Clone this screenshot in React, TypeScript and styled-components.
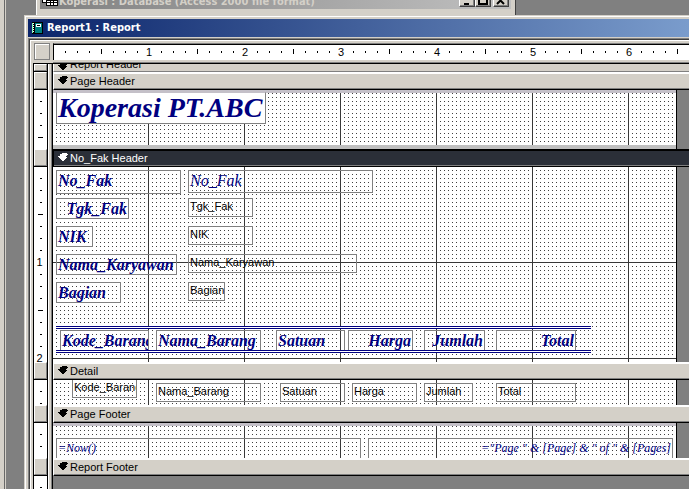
import React from 'react';
import styled, { createGlobalStyle, css } from 'styled-components';

const FACE = '#d4d0c8';
const SHADOW = '#808080';
const INK = '#000080';
const UI = "'Liberation Sans', Arial, sans-serif";
const SERIF = "'Liberation Serif', 'Times New Roman', serif";

const GlobalStyle = createGlobalStyle`
  * { box-sizing: border-box; }
  html, body { margin: 0; height: 100%; }
  body { background: ${SHADOW}; overflow: hidden; font: 11px/14px ${UI}; color: #000; }
  #root { height: 100%; }
`;

const Desktop = styled.div`
  display: flex;
  height: 100%;
  min-height: 100vh;
`;

const AppEdge = styled.div`
  flex: 0 0 6px;
  background: ${FACE};
  border-right: 1px solid ${FACE};
  box-shadow: inset -1px 0 #686868;
`;

const Workspace = styled.main`
  flex: 1;
  min-width: 0;
  display: flex;
  flex-direction: column;
  padding-left: 18px;
  overflow: hidden;
`;

const DatabaseWindow = styled.section`
  flex: 0 0 15px;
  width: 480px;
  margin-left: 12px;
  padding-left: 3px;
  padding-right: 4px;
  background: ${FACE};
  border-left: 1px solid #fff;
  border-right: 1px solid #404040;
`;

const DatabaseTitle = styled.header`
  height: 9px;
  display: flex;
  align-items: flex-end;
  gap: 1px;
  padding: 0 2px;
  overflow: hidden;
  background: linear-gradient(to right, #808080, #c0c0c0);
  color: ${FACE};
  font: bold 11px/14px 'DejaVu Sans Condensed', 'DejaVu Sans', sans-serif;

  h2 { flex: 1; margin: 0; font: inherit; height: 14px; }
`;

const TableSlot = styled.span`
  display: flex;
  padding-bottom: 3px;
`;

const CaptionButtons = styled.div`
  display: flex;
  height: 16px;
  margin-bottom: 2px;
`;

const CaptionButton = styled.button<{ $apart?: boolean }>`
  width: 16px;
  height: 14px;
  padding: 0;
  margin-left: ${p => (p.$apart ? 2 : 0)}px;
  display: grid;
  place-items: center;
  align-self: flex-end;
  background: ${FACE};
  border: 1px solid #fff;
  border-right-color: #404040;
  border-bottom-color: #404040;
  box-shadow: inset -1px -1px ${SHADOW};
`;

const ReportWindow = styled.section`
  flex: 1;
  min-height: 0;
  display: flex;
  flex-direction: column;
  padding: 2px 0 0 2px;
  background: ${FACE};
  border-top: 1px solid ${FACE};
  border-left: 1px solid ${FACE};
  box-shadow: inset 1px 1px #fff;
`;

const TitleBar = styled.header`
  flex: 0 0 19px;
  display: flex;
  align-items: center;
  gap: 4px;
  margin: 1px 0 0 1px;
  padding: 0 0 0 4px;
  background: linear-gradient(to right, #0a246a, #7a9ccc);
  border-bottom: 1px solid ${FACE};
  color: #fff;

  h1 { margin: 0; font: bold 11px/14px 'DejaVu Sans Condensed', 'DejaVu Sans', sans-serif; }
`;

const Client = styled.div`
  flex: 1;
  min-height: 0;
  display: flex;
  flex-direction: column;
  margin-left: 1px;
  padding: 4px 0 0 4px;
  border-top: 1px solid ${SHADOW};
  border-left: 1px solid ${SHADOW};
  box-shadow: inset 1px 1px #404040, inset 2px 2px #fff;
`;

const RulerRow = styled.div`
  flex: 0 0 20px;
  display: flex;
  gap: 3px;
  padding-left: 1px;
`;

const Corner = styled.button`
  flex: 0 0 16px;
  height: 17px;
  padding: 0;
  background: ${FACE};
  border: 1px solid ${SHADOW};
  box-shadow: inset 1px 1px #fff;
`;

const HorizontalRuler = styled.div`
  flex: 1;
  min-width: 0;
  display: flex;
  height: 17px;
  padding: 0 0 2px 5px;
  overflow: hidden;
  background: #fff;
  border-top: 1px solid ${SHADOW};
  border-left: 1px solid #000;
  box-shadow: inset 0 1px #000, 0 2px ${FACE}, 0 3px ${SHADOW};
`;

const HTick = styled.div<{ $half?: boolean }>`
  flex: 0 0 12px;
  display: flex;
  align-items: center;
  justify-content: center;
  padding-top: 1px;
  font-size: 11px;
  line-height: 12px;

  &::before {
    content: '';
    width: 1px;
    height: ${p => (p.$half ? 5 : 2)}px;
    background: #000;
  }
`;

const HNumber = styled(HTick)`
  &::before { display: none; }
`;

const Bands = styled.div`
  flex: 1;
  min-height: 0;
  border-top: 1px solid #000;
  overflow: hidden;
  display: flex;
  flex-direction: column;
`;

const Row = styled.div<{ $height?: number }>`
  display: flex;
  flex: ${p => (p.$height ? `0 0 ${p.$height}px` : '1 0 0')};
  min-height: 0;
`;

const Gutter = styled.div`
  flex: 0 0 15px;
  overflow: hidden;
  padding-top: 5px;
  background: #fff;
  border: solid #000;
  border-width: 0 1px;
`;

const Divider = styled.div`
  flex: 0 0 5px;
  background: ${FACE};
  border-right: 1px solid #000;
  box-shadow: inset -1px 0 ${SHADOW}, inset 1px 0 #fff;
`;

const VTick = styled.div<{ $half?: boolean }>`
  height: 12px;
  display: flex;
  align-items: center;
  justify-content: center;
  font-size: 11px;
  line-height: 12px;

  &::before {
    content: '';
    width: ${p => (p.$half ? 5 : 2)}px;
    height: 1px;
    background: #000;
  }
`;

const VNumber = styled(VTick)`
  padding-right: 2px;
  &::before { display: none; }
`;

const SelectorCell = styled(Gutter)`
  padding: 0;
  background: ${FACE};
  display: flex;
  border-bottom-width: 1px;
`;

const Selector = styled.button`
  flex: 1;
  padding: 0;
  background: ${FACE};
  border: 1px solid #fff;
  border-right-color: ${SHADOW};
  border-bottom-color: ${SHADOW};
`;

const BandBar = styled.div<{ $selected?: boolean; $clipped?: boolean }>`
  flex: 1;
  min-width: 0;
  display: flex;
  align-items: ${p => (p.$clipped ? 'flex-end' : 'center')};
  gap: 2px;
  padding: 0 0 2px 4px;
  overflow: hidden;
  white-space: nowrap;
  font-size: 11px;
  line-height: 14px;
  background: ${FACE};
  border-top: 2px solid #fff;
  border-left: 1px solid #fff;
  border-bottom: 1px solid #000;
  box-shadow: inset 0 -1px ${SHADOW};
  ${p => p.$clipped && css`
    padding-bottom: 0;
    border-top: 0;
    border-bottom-color: ${SHADOW};
    box-shadow: none;
  `}
  ${p => p.$selected && css`
    background: #2b2f38;
    color: #fff;
    border-color: #000;
  `}
`;

const Canvas = styled.div`
  flex: 1;
  min-width: 0;
  display: flex;
  background: ${SHADOW};
  overflow: hidden;
`;

/* Six and a half inches of printable width at 96 pixels to the inch. */
const Sheet = styled.div<{ $topEdge?: boolean; $bottomEdge?: boolean }>`
  position: relative;
  flex: 0 0 624px;
  overflow: hidden;
  border-right: 1px solid #000;
  background-image:
    ${p => (p.$topEdge ? 'linear-gradient(#c4c0c8, #c4c0c8),' : '')}
    ${p => (p.$bottomEdge ? 'linear-gradient(#c0c0c0, #c0c0c0),' : '')}
    linear-gradient(to right, transparent 95px, #383838 95px),
    linear-gradient(to bottom, transparent 95px, #383838 95px),
    linear-gradient(to right, #fff 3px, transparent 3px),
    linear-gradient(to bottom, #fff 3px, #404040 3px);
  background-size:
    ${p => (p.$topEdge ? '100% 3px,' : '')}
    ${p => (p.$bottomEdge ? '100% 4px,' : '')}
    96px 96px, 96px 96px, 4px 4px, 4px 4px;
  background-position:
    ${p => (p.$topEdge ? '0 0,' : '')}
    ${p => (p.$bottomEdge ? '0 100%,' : '')}
    0 0, 0 0, 0 0, 0 0;
  background-repeat:
    ${p => (p.$topEdge ? 'no-repeat,' : '')}
    ${p => (p.$bottomEdge ? 'no-repeat,' : '')}
    repeat, repeat, repeat, repeat;
`;

type Kind = 'title' | 'label' | 'script' | 'expr' | 'field';

const kinds = {
  title: css`font: italic bold 28px/29px ${SERIF}; color: ${INK}; background: #fff; border-top-color: #c4c0c8;`,
  label: css`font: italic bold 16px/20px ${SERIF}; color: ${INK};`,
  script: css`font: italic 16px/19px ${SERIF}; color: ${INK};`,
  expr: css`font: italic 12px/18px ${SERIF}; color: ${INK};`,
  field: css`font: 11px/14px ${UI}; color: #000;`,
};

/* A report control, placed where the designer dropped it on the sheet. */
const Control = styled.div<{ $x: number; $y: number; $w: number; $h: number; $kind: Kind; $right?: boolean }>`
  position: absolute;
  left: ${p => p.$x}px;
  top: ${p => p.$y}px;
  width: ${p => p.$w}px;
  height: ${p => p.$h}px;
  padding: 0 1px;
  border: 1px solid ${SHADOW};
  overflow: hidden;
  white-space: pre;
  text-align: ${p => (p.$right ? 'right' : 'left')};
  ${p => kinds[p.$kind]}
`;

const DoubleRule = styled.div<{ $y: number }>`
  position: absolute;
  left: 3px;
  top: ${p => p.$y}px;
  width: 535px;
  height: 3px;
  background: #fff;
  border: solid ${INK};
  border-width: 1px 0;
`;

type Item = { x: number; y: number; w: number; h: number; kind: Kind; text: string; right?: boolean };

const c = (kind: Kind, text: string, x: number, y: number, w: number, h: number, right = false): Item =>
  ({ kind, text, x, y, w, h, right });

type Band = {
  name: string;
  bar: number;
  body: number;
  selected?: boolean;
  clipped?: boolean;
  topEdge?: boolean;
  bottomEdge?: boolean;
  rules?: number[];
  items: Item[];
};

const bands: Band[] = [
  { name: 'Report Header', bar: 8, body: 0, clipped: true, items: [] },
  {
    name: 'Page Header', bar: 18, body: 59, topEdge: true, bottomEdge: true,
    items: [c('title', 'Koperasi PT.ABC', 3, 2, 210, 32)],
  },
  {
    name: 'No_Fak Header', bar: 18, body: 195, selected: true, rules: [159, 183],
    items: [
      c('label', 'No_Fak', 3, 3, 125, 24),
      c('label', 'Tgk_Fak', 3, 31, 73, 21, true),
      c('label', 'NIK', 3, 59, 37, 21),
      c('label', 'Nama_Karyawan', 3, 87, 121, 21),
      c('label', 'Bagian', 3, 115, 65, 21),
      c('script', 'No_Fak', 135, 3, 185, 23),
      c('field', 'Tgk_Fak', 135, 31, 65, 19),
      c('field', 'NIK', 135, 59, 65, 19),
      c('field', 'Nama_Karyawan', 135, 87, 169, 19),
      c('field', 'Bagian', 135, 115, 37, 19),
      c('label', 'Kode_Barang', 7, 163, 89, 21, true),
      c('label', 'Nama_Barang', 103, 163, 105, 21),
      c('label', 'Satuan', 223, 163, 69, 21),
      c('label', 'Harga', 295, 163, 65, 21, true),
      c('label', 'Jumlah', 371, 163, 61, 21, true),
      c('label', 'Total', 443, 163, 80, 21, true),
    ],
  },
  {
    name: 'Detail', bar: 18, body: 25,
    items: [
      c('field', 'Kode_Barang', 19, -1, 65, 19),
      c('field', 'Nama_Barang', 103, 3, 105, 19),
      c('field', 'Satuan', 227, 3, 65, 19),
      c('field', 'Harga', 299, 3, 65, 19),
      c('field', 'Jumlah', 371, 3, 49, 19),
      c('field', 'Total', 443, 3, 80, 19),
    ],
  },
  {
    name: 'Page Footer', bar: 18, body: 35, topEdge: true,
    items: [
      c('expr', '=Now()', 3, 15, 305, 24),
      c('expr', '="Page " & [Page] & " of " & [Pages]', 315, 15, 305, 24, true),
    ],
  },
  { name: 'Report Footer', bar: 18, body: 0, items: [] },
];

const Arrow = () => (
  <svg width="10" height="9" viewBox="0 0 10 9" fill="currentColor" shapeRendering="crispEdges" aria-hidden="true">
    <path d="M4 0H9V1H10V2H9V3H8V4H9V5H8V6H7V7H6V8H4V7H3V6H2V5H1V4H0V3H2V1H4Z" />
  </svg>
);

const BookIcon = () => (
  <svg width="11" height="12" viewBox="0 0 11 12" shapeRendering="crispEdges" aria-hidden="true">
    <path d="M0 0H11V12H0Z" fill="#000" />
    <path d="M0 1H1V11H0Z" fill="#8fb" />
    <path d="M1 1H2V2H1ZM1 3H2V4H1ZM1 5H2V6H1ZM1 7H2V8H1ZM1 9H2V10H1Z" fill="#fff" />
    <path d="M3 1H10V11H3Z" fill="#008080" />
    <path d="M4 2H9V5H4Z" fill="#fff" />
    <path d="M5 3H8V4H5Z" fill="#000" />
  </svg>
);

const TableIcon = () => (
  <svg width="16" height="16" viewBox="0 0 16 16" shapeRendering="crispEdges" aria-hidden="true">
    <path d="M0 0H12V13H0Z" fill="#000" />
    <path d="M1 1H4V12H1ZM5 1H11V12H5Z" fill="#fff" />
    <path d="M4 5H16V16H4Z" fill="#000" />
    <path d="M5 8H8V10H5ZM9 8H11V10H9ZM12 8H15V10H12ZM5 11H8V12H5ZM9 11H11V12H9ZM12 11H15V12H12ZM5 13H8V15H5ZM9 13H11V15H9ZM12 13H15V15H12Z" fill="#fff" />
  </svg>
);

const Glyph = ({ d }: { d: string }) => (
  <svg width="10" height="9" viewBox="0 0 10 9" fill="none" stroke="#000" strokeWidth="2" aria-hidden="true">
    <path d={d} />
  </svg>
);

const horizontalTicks = Array.from({ length: 160 }, (_, i) => i + 1);
const verticalTicks = (height: number) => Array.from({ length: Math.ceil(height / 12) + 1 }, (_, i) => i + 1);

const VerticalTicks = ({ height }: { height: number }) => (
  <>
    {verticalTicks(height).map(n =>
      n % 8 === 0 ? <VNumber key={n}>{n / 8}</VNumber> : <VTick key={n} $half={n % 4 === 0} />
    )}
  </>
);

const BandView = ({ band }: { band: Band }) => (
  <>
    <Row $height={band.bar}>
      <SelectorCell>
        <Selector aria-label={band.name} />
      </SelectorCell>
      <Divider />
      <BandBar $selected={band.selected} $clipped={band.clipped}>
        <Arrow />
        <span>{band.name}</span>
      </BandBar>
    </Row>
    {band.body > 0 && (
      <Row $height={band.body}>
        <Gutter>
          <VerticalTicks height={band.body} />
        </Gutter>
        <Divider />
        <Canvas>
          <Sheet $topEdge={band.topEdge} $bottomEdge={band.bottomEdge}>
            {band.items.map(i => (
              <Control key={i.kind + i.text} $x={i.x} $y={i.y} $w={i.w} $h={i.h} $kind={i.kind} $right={i.right}>
                {i.text}
              </Control>
            ))}
            {band.rules?.map(y => <DoubleRule key={y} $y={y} />)}
          </Sheet>
        </Canvas>
      </Row>
    )}
  </>
);

export default function App() {
  return (
    <Desktop>
      <GlobalStyle />
      <AppEdge />
      <Workspace>
        <DatabaseWindow>
          <DatabaseTitle>
            <TableSlot><TableIcon /></TableSlot>
            <h2>Koperasi : Database (Access 2000 file format)</h2>
            <CaptionButtons>
              <CaptionButton aria-label="Minimize"><Glyph d="M2 8H7" /></CaptionButton>
              <CaptionButton aria-label="Maximize"><Glyph d="M1 1H9V8H1Z" /></CaptionButton>
              <CaptionButton aria-label="Close" $apart><Glyph d="M1 1L8 8M8 1L1 8" /></CaptionButton>
            </CaptionButtons>
          </DatabaseTitle>
        </DatabaseWindow>
        <ReportWindow>
          <TitleBar>
            <BookIcon />
            <h1>Report1 : Report</h1>
          </TitleBar>
          <Client>
            <RulerRow>
              <Corner aria-label="Select report" />
              <HorizontalRuler>
                {horizontalTicks.map(n =>
                  n % 8 === 0 ? <HNumber key={n}>{n / 8}</HNumber> : <HTick key={n} $half={n % 4 === 0} />
                )}
              </HorizontalRuler>
            </RulerRow>
            <Bands>
              {bands.map(b => <BandView key={b.name} band={b} />)}
              <Row>
                <Gutter>
                  <VerticalTicks height={600} />
                </Gutter>
                <Divider />
                <Canvas />
              </Row>
            </Bands>
          </Client>
        </ReportWindow>
      </Workspace>
    </Desktop>
  );
}
